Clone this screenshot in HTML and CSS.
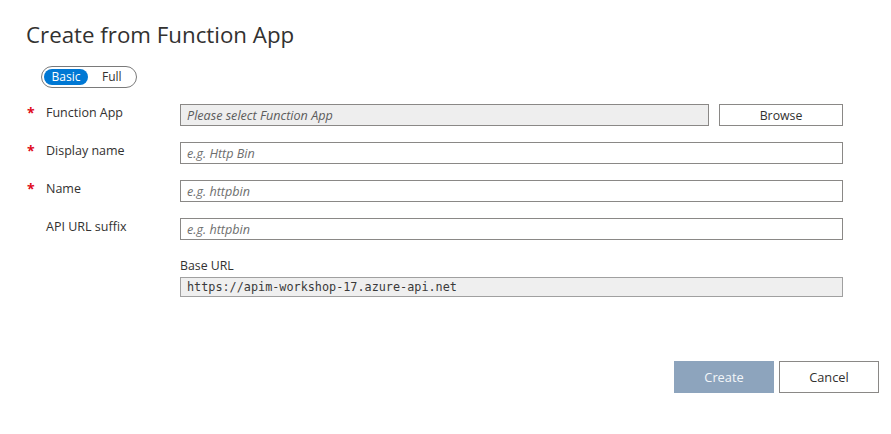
FILE: index.html
```html
<!DOCTYPE html>
<html>
<head>
<meta charset="utf-8">
<link rel="stylesheet" href="styles.css">
</head>
<body>
<div class="dialog">
  <h1 class="title">Create from Function App</h1>
  <div class="toggle">
    <span class="opt active">Basic</span>
    <span class="opt">Full</span>
  </div>
  <div class="form">
    <div class="row">
      <span class="req">*</span>
      <span class="label">Function App</span>
      <div class="field with-btn">
        <div class="input disabled">Please select Function App</div>
        <button class="browse">Browse</button>
      </div>
    </div>
    <div class="row">
      <span class="req">*</span>
      <span class="label">Display name</span>
      <div class="field"><div class="input">e.g. Http Bin</div></div>
    </div>
    <div class="row">
      <span class="req">*</span>
      <span class="label">Name</span>
      <div class="field"><div class="input">e.g. httpbin</div></div>
    </div>
    <div class="row">
      <span class="req"></span>
      <span class="label">API URL suffix</span>
      <div class="field"><div class="input">e.g. httpbin</div></div>
    </div>
    <div class="row base">
      <span class="req"></span>
      <span class="label"></span>
      <div class="field column">
        <div class="base-label">Base URL</div>
        <div class="base-url">https://apim-workshop-17.azure-api.net</div>
      </div>
    </div>
  </div>
  <div class="actions">
    <button class="btn primary">Create</button>
    <button class="btn">Cancel</button>
  </div>
</div>
</body>
</html>
```
FILE: styles.css
```css
* { box-sizing: border-box; }
html, body { margin: 0; padding: 0; background: #fff; }
body {
  font-family: "Open Sans", "Noto Sans", sans-serif;
  color: #323130;
  font-size: 12.5px;
}
.dialog {
  width: 891px;
  height: 434px;
  padding: 20px 12px 0 26px;
}
.title {
  margin: 0;
  font-weight: 400;
  font-size: 22.3px;
  line-height: 29px;
  color: #323130;
}
.toggle {
  display: inline-flex;
  align-items: center;
  margin: 17px 0 0 15px;
  height: 22px;
  width: 96px;
  border: 1px solid #7a7a7a;
  border-radius: 11px;
  padding: 0 2px;
}
.opt {
  font-size: 12px;
  line-height: 16px;
  padding: 0 6px;
  border-radius: 8px;
  color: #323130;
}
.opt.active {
  background: #0078d4;
  color: #fff;
  width: 44px;
  text-align: center;
  margin-right: 8px;
}
.form {
  margin-top: 16px;
  margin-right: 36px;
  display: flex;
  flex-direction: column;
  gap: 16px;
}
.row {
  display: flex;
  align-items: flex-start;
}
.req {
  width: 20px;
  color: #e00b1c;
  font-weight: 700;
  font-size: 14px;
  line-height: 18px;
  padding-left: 1px;
}
.label {
  width: 134px;
  font-size: 12.5px;
  line-height: 18px;
}
.field {
  flex: 1;
  display: flex;
  gap: 10px;
}
.field.column { flex-direction: column; gap: 3px; margin-top: 2px; }
.input {
  flex: 1;
  height: 22px;
  border: 1px solid #8a8886;
  padding: 0 6px;
  font-style: italic;
  font-size: 12.6px;
  line-height: 21px;
  color: #6e6e6e;
}
.input.disabled {
  background: #eeeeee;
  color: #5c5c5c;
}
.browse {
  width: 124px;
  height: 22px;
  border: 1px solid #8a8886;
  background: #fff;
  font-family: inherit;
  font-size: 12.3px;
  color: #323130;
  padding: 0;
}
.base-label { font-size: 12.3px; line-height: 16px; color: #323130; }
.base-url {
  height: 20px;
  border: 1px solid #a0a0a0;
  background: #efefef;
  font-family: "DejaVu Sans Mono", "Liberation Mono", monospace;
  font-size: 11.8px;
  line-height: 18px;
  padding: 0 6px;
  color: #3a3a3a;
}
.actions {
  display: flex;
  justify-content: flex-end;
  gap: 5px;
  margin-top: 64px;
}
.btn {
  width: 100px;
  height: 32px;
  border: 1px solid #8a8886;
  background: #fff;
  font-family: inherit;
  font-size: 12.8px;
  color: #323130;
  padding: 0;
}
.btn.primary {
  background: #8da4bd;
  border-color: #8da4bd;
  color: #f3f6f9;
}
```
